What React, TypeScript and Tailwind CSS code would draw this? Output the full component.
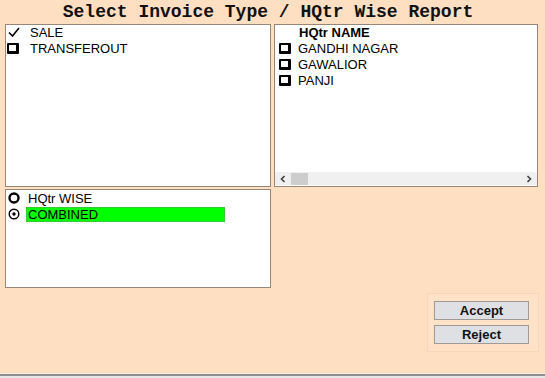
const Check = () => (
  <svg width="12" height="10" viewBox="0 0 12 10">
    <path d="M1 5.5 L4.5 9 L11 1" fill="none" stroke="#000" strokeWidth="1.6" />
  </svg>
)

const Box = () => (
  <div className="w-[12px] h-[11px] border-2 border-r-[3px] border-b-[3px] border-black rounded-[1px] bg-white" />
)

const Radio = ({ on }: { on?: boolean }) => (
  <svg width="12" height="12" viewBox="0 0 12 12">
    <circle cx="6" cy="6" r={on ? 4.8 : 4.5} fill="#fff" stroke="#000" strokeWidth={on ? 1.4 : 2.4} />
    {on && <circle cx="6" cy="6" r="1.7" fill="#000" />}
  </svg>
)

const Chevron = ({ right }: { right?: boolean }) => (
  <svg width="8" height="8" viewBox="0 0 8 8">
    <path d={right ? "M2.5 1 L5.5 4 L2.5 7" : "M5.5 1 L2.5 4 L5.5 7"} fill="none" stroke="#404040" strokeWidth="1.6" />
  </svg>
)

const item = "h-[16px] flex items-center text-[13px] leading-none text-black"

export default function App() {
  return (
    <div
      className="w-[545px] h-[378px] flex flex-col bg-[#ffdfc1] overflow-hidden"
      style={{ fontFamily: '"Liberation Sans", Arial, sans-serif' }}
    >
      <div
        className="h-[24px] leading-[24px] text-center pr-[9px] text-[18px] font-bold text-[#111]"
        style={{ fontFamily: '"Liberation Mono", "Courier New", monospace' }}
      >
        Select Invoice Type / HQtr Wise Report
      </div>

      <div className="grid grid-cols-[266px_264px] grid-rows-[163px_99px] gap-x-[3px] gap-y-[2px] pl-[5px]">
        <div className="bg-white border border-[#9a8676] pt-0">
          <div className={item + " -mt-[1px]"}>
            <div className="w-[24px] pl-[2px] flex items-center"><Check /></div>
            SALE
          </div>
          <div className={item}>
            <div className="w-[24px] pl-[1px] flex items-center"><Box /></div>
            TRANSFEROUT
          </div>
        </div>

        <div className="bg-white border border-[#9a8676] flex flex-col">
          <div className="flex-1 -mt-[1px]">
            <div className={item + " font-bold pl-[24px]"}>HQtr NAME</div>
            {["GANDHI NAGAR", "GAWALIOR", "PANJI"].map((n) => (
              <div key={n} className={item}>
                <div className="w-[23px] pl-[4px] flex items-center"><Box /></div>
                {n}
              </div>
            ))}
          </div>
          <div className="h-[13px] mb-[1px] bg-[#f0f0f0] flex items-center">
            <div className="w-[16px] flex justify-center"><Chevron /></div>
            <div className="w-[17px] h-[12px] bg-[#cdcdcd]" />
            <div className="flex-1" />
            <div className="w-[16px] flex justify-center"><Chevron right /></div>
          </div>
        </div>

        <div className="bg-white border border-[#9a8676]">
          <div className={item}>
            <div className="w-[22px] pl-[2px] flex items-center"><Radio /></div>
            HQtr WISE
          </div>
          <div className={item}>
            <div className="w-[20px] pl-[2px] flex items-center"><Radio on /></div>
            <div className="w-[199px] h-[15px] bg-[#00ff00] border border-[#33cc33] flex items-center pl-[1px]">
              COMBINED
            </div>
          </div>
        </div>
      </div>

      <div className="flex justify-end pr-[6px] pt-[5px]">
        <div className="w-[112px] h-[59px] border border-[#f8d6b8] bg-[#ffe2c7] flex flex-col items-center justify-center gap-[5px] pr-[3px]">
          <button className="w-[95px] h-[19px] bg-[#dfe0e4] border border-[#a09a96] text-[13px] font-bold text-[#111] leading-none">
            Accept
          </button>
          <button className="w-[95px] h-[19px] bg-[#dfe0e4] border border-[#a09a96] text-[13px] font-bold text-[#111] leading-none">
            Reject
          </button>
        </div>
      </div>

      <div className="flex-1" />
      <div className="h-[1px] bg-[#f4ece6]" />
      <div className="h-[2px] bg-[#8f8f8f]" />
      <div className="h-[2px] bg-[#e6e6e6]" />
    </div>
  )
}
